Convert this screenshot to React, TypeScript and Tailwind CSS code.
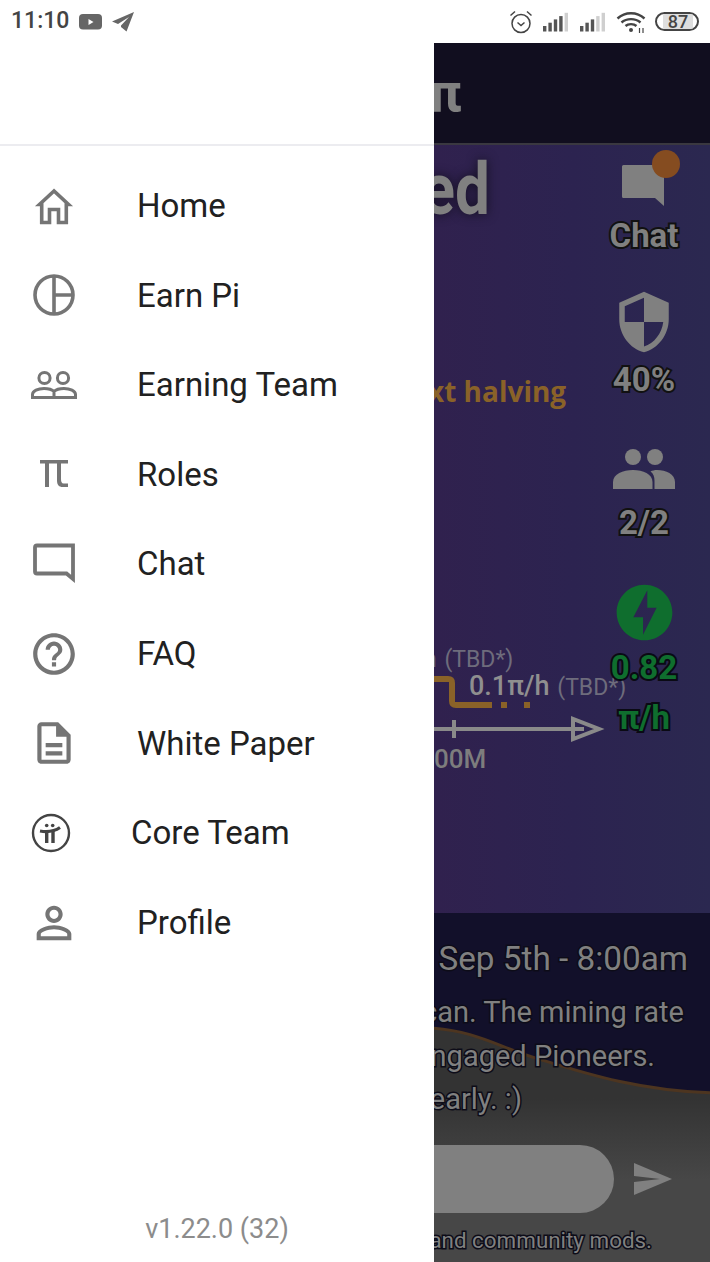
import React from "react"
import { MdHelpOutline, MdOfflineBolt, MdOutlineDescription, MdPersonOutline, MdSecurity } from "react-icons/md"

const ICON_COLOR = "#757575"

const HomeIcon = () => (
  <svg viewBox="0 0 48 48" className="h-12 w-12" fill="none" stroke={ICON_COLOR} strokeWidth="3.6">
    <path d="M24 9 9.5 22.5h2.2v18h7.8V27.5h9v13h7.8v-18h2.2z" />
  </svg>
)

const PieIcon = () => (
  <svg viewBox="0 0 48 48" className="h-12 w-12" fill="none" stroke={ICON_COLOR} strokeWidth="3.6">
    <circle cx="24" cy="24" r="19" />
    <path d="M24 5v38M24 24h19" />
  </svg>
)

const TeamIcon = () => (
  <svg viewBox="0 0 48 48" className="h-12 w-12" fill="none" stroke={ICON_COLOR} strokeWidth="3">
    <circle cx="14.5" cy="17" r="5.6" />
    <circle cx="33" cy="17" r="5.6" />
    <path d="M2.5 36.5v-3c0-3.500 5.500-6 11.500-6 4.500 0 8 1 10 3 2-2 5.500-3 10-3 6 0 11.500 2.500 11.500 6v3zM24 30.500v6" />
  </svg>
)

const PiIcon = () => (
  <svg viewBox="0 0 48 48" className="h-12 w-12" fill={ICON_COLOR}>
    <path d="M10 9h28v3.600H31v15.400c0 3 .8 4.400 2.500 4.400H38V36h-5.500c-3.300 0-5.500-2-5.500-6.500V12.600h-8V36h-4V12.600h-5z" />
  </svg>
)

const ChatIcon = () => (
  <svg viewBox="0 0 48 48" className="h-12 w-12" fill="none" stroke={ICON_COLOR} strokeWidth="3.8">
    <path d="M7 5.500h36v33.500l-6.500-5.500H7a2 2 0 0 1-2-2V7.500a2 2 0 0 1 2-2z" />
  </svg>
)

const PiLogo = () => (
  <svg viewBox="0 0 40 40" className="h-10 w-10" fill="none" stroke="#444444">
    <circle cx="20" cy="20" r="18" strokeWidth="2.400" />
    <path d="M9 18c6 1 14 .6 20-3.500" strokeWidth="3.200" />
    <path d="M15.700 18v12M22 18v12" strokeWidth="3.400" />
    <circle cx="15.700" cy="12.500" r="1.800" fill="#444444" stroke="none" />
    <circle cx="21.700" cy="12.500" r="1.800" fill="#444444" stroke="none" />
  </svg>
)

const menu = [
  { label: "Home", icon: <HomeIcon /> },
  { label: "Earn Pi", icon: <PieIcon /> },
  { label: "Earning Team", icon: <TeamIcon /> },
  { label: "Roles", icon: <PiIcon /> },
  { label: "Chat", icon: <ChatIcon /> },
  { label: "FAQ", icon: <MdHelpOutline size={50} color={ICON_COLOR} /> },
  { label: "White Paper", icon: <MdOutlineDescription size={50} color={ICON_COLOR} /> },
  { label: "Core Team", icon: <PiLogo />, tight: true },
  { label: "Profile", icon: <MdPersonOutline size={52} color={ICON_COLOR} /> },
]

const Signal = ({ bars }: { bars: number }) => (
  <svg viewBox="0 0 27 20" className="h-5 w-[27px]">
    {[0, 1, 2, 3, 4].map((i) => (
      <rect
        key={i}
        x={i * 5.4}
        y={14 - i * 3.300}
        width="3.400"
        height={5.500 + i * 3.300}
        fill={i < bars ? "#555555" : "#cfcfcf"}
      />
    ))}
  </svg>
)

const StatusBar = () => (
  <div className="flex h-[43px] items-center justify-between bg-white pl-[11px] pr-[11px]">
    <div className="flex items-center">
      <span className="text-[23px] font-medium text-[#444444]">11:10</span>
      <svg viewBox="0 0 23 16" className="ml-[10px] h-4 w-[23px]">
        <rect width="23" height="15.500" rx="4" fill="#666666" />
        <path d="M9.500 5v6l5-3z" fill="#ffffff" />
      </svg>
      <svg viewBox="0 0 22 20" className="ml-[10px] h-5 w-[22px]">
        <path d="M22 0 0 9.500l6 2.500L17 5 9 13.500v1.500l5.500 4.500z" fill="#666666" />
      </svg>
    </div>
    <div className="flex items-center">
      <svg viewBox="0 0 26 26" className="h-[26px] w-[26px]" fill="none" stroke="#444444" strokeWidth="1.500">
        <circle cx="13" cy="14.500" r="9" />
        <path d="M9.500 13.500 13 16.500l3.500-3M2.500 6.500 7 2.500M23.500 6.500 19 2.500" />
      </svg>
      <div className="ml-[9px]">
        <Signal bars={4} />
      </div>
      <div className="ml-[10px]">
        <Signal bars={3} />
      </div>
      <svg viewBox="0 0 30 22" className="ml-[9px] h-[22px] w-[30px]" fill="none" stroke="#444444" strokeWidth="2.400">
        <path d="M1.500 7.500c7.500-7 19.500-7 27 0M5.500 11.500c5-4.500 14-4.500 19 0M9.500 15c2.800-2.500 8.200-2.500 11 0" />
        <circle cx="15" cy="19" r="2" fill="#444444" stroke="none" />
        <path d="M23.500 17v5M27 17v5" strokeWidth="1.200" />
      </svg>
      <div className="ml-[9px] flex h-[19px] w-[44px] items-center overflow-hidden rounded-full border-2 border-[#444444] pl-[6px]">
        <div className="flex h-full w-[30px] items-center justify-center bg-[#dedede] text-[18px] font-medium text-[#444444]">87</div>
      </div>
    </div>
  </div>
)

const Drawer = () => (
  <div className="flex w-[434px] shrink-0 flex-col bg-white">
    <div className="h-[103px] border-b-2 border-[#ececf0]" />
    <div className="flex-1 pt-[15px]">
      {menu.map((item) => (
        <div key={item.label} className="flex h-[89.6px] items-center">
          <div className={item.tight ? "flex w-[131px] justify-center pr-[29px]" : "flex w-[137px] justify-center pr-[29px]"}>
            {item.icon}
          </div>
          <span className="text-[33px] text-[#212121]">{item.label}</span>
        </div>
      ))}
    </div>
    <div className="pb-[13px] text-center text-[27px] text-[#8c8c8c]">v1.22.0 (32)</div>
  </div>
)

const outlined = "font-bold text-[#808080] [-webkit-text-stroke:4px_#111111] [paint-order:stroke_fill]"
const greenOutlined = "font-bold text-[#0f6e2e] [-webkit-text-stroke:4px_#0a0a14] [paint-order:stroke_fill]"
const thinOutlined = "text-[#808080] [-webkit-text-stroke:3px_#0d0c18] [paint-order:stroke_fill]"

const SideStats = () => (
  <div className="relative flex w-[132px] shrink-0 flex-col items-center pt-[17px] leading-none">
    <div className="relative h-[48px] w-[48px]">
      <svg viewBox="0 0 48 48" className="h-[48px] w-[48px]">
        <path d="M3.500 3H44v41l-9-8H3.500A1.500 1.500 0 0 1 2 34.500v-30A1.500 1.500 0 0 1 3.500 3z" fill="#808080" />
      </svg>
      <div className="absolute right-[-12px] top-[-12px] h-[28px] w-[28px] rounded-full bg-[#854c20]" />
    </div>
    <div className={`mt-[9px] text-[33px] ${outlined}`}>Chat</div>
    <div className="mt-[37px]">
      <MdSecurity size={66} color="#808080" />
    </div>
    <div className={`mt-[8px] text-[33px] ${outlined}`}>40%</div>
    <svg viewBox="0 0 62 40" className="mt-[53px] h-[40px] w-[62px]" fill="#808080">
      <circle cx="20" cy="8" r="8" />
      <circle cx="42" cy="8" r="8" />
      <path d="M0 40v-7c0-8 10-12 20-12s19.500 4 19.500 12v7z" />
      <path d="M44 21c9 0 18 4 18 12v7H41.500v-8c0-4-1-7.500-4-9.500 2-1 4-1.500 6.500-1.500z" />
    </svg>
    <div className={`mt-[17px] text-[33px] ${outlined}`}>2/2</div>
    <div className="mt-[40px]">
      <MdOfflineBolt size={67} color="#0f6e2e" />
    </div>
    <div className={`mt-[5px] text-[33px] ${greenOutlined}`}>0.82</div>
    <div className={`mt-[17px] text-[33px] ${greenOutlined}`}>π/h</div>
  </div>
)

const Chart = () => (
  <div className="relative min-w-0 flex-1">
    <div className="absolute left-0 top-[15px] flex w-[56px] origin-bottom scale-y-[1.17] justify-end whitespace-nowrap text-[62px] font-bold leading-[70px] text-[#808080] [text-shadow:0_0_10px_#141020]">
      ed
    </div>
    <div className="absolute left-[-6px] top-[225px] whitespace-nowrap font-['Open_Sans',sans-serif] text-[28px] font-bold text-[#8a6228]">
      xt halving
    </div>
    <div className="absolute left-[-10px] top-[498px] whitespace-nowrap text-[23px] text-[#6e6c7c]">h <span className="ml-[2px]">(TBD*)</span></div>
    <div className="absolute left-[35px] top-[521px] whitespace-nowrap text-[27px] font-medium text-[#8f8f8f]">
      0.1π/h <span className="ml-[1px] text-[23px] font-normal text-[#6e6c7c]">(TBD*)</span>
    </div>
    <svg viewBox="0 0 180 90" className="absolute left-0 top-[530px] h-[90px] w-[180px]" fill="none">
      <path d="M0 4h14c3 0 4 1 4 4v18c0 3 1 4 4 4h36" stroke="#8a6228" strokeWidth="6" />
      <path d="M67 30h6M90 30h6" stroke="#8a6228" strokeWidth="6" />
      <path d="M0 54h150M20 45v18" stroke="#8a8a8a" strokeWidth="4" />
      <path d="M139 44v20l26-10z" stroke="#8a8a8a" strokeWidth="4" />
    </svg>
    <div className="absolute left-0 top-[595px] text-[26px] font-medium text-[#7d7d7d]">00M</div>
  </div>
)

const Notice = () => (
  <div className="relative h-[349px] overflow-hidden bg-[#12102a]">
    <svg viewBox="0 0 276 349" preserveAspectRatio="none" className="absolute inset-0 h-full w-full">
      <defs>
        <linearGradient id="sand" x1="0" y1="0" x2="0" y2="1">
          <stop offset="0.3" stopColor="#333333" />
          <stop offset="0.65" stopColor="#474747" />
        </linearGradient>
      </defs>
      <path d="M-5 115C45 118 65 135 105 146c45 14 100 32 176 34v169H-5z" fill="url(#sand)" />
      <path d="M-5 115C45 118 65 135 105 146c45 14 100 32 176 34" fill="none" stroke="#4d3520" strokeWidth="3" />
    </svg>
    <div className="relative flex flex-col">
      <div className={`mt-[27px] flex justify-end whitespace-nowrap pr-[22px] text-[33.300px] leading-[38px] ${thinOutlined}`}>Sep 5th - 8:00am</div>
      <div className={`mt-[13px] flex justify-end whitespace-nowrap pr-[26px] text-[29px] leading-[43.500px] ${thinOutlined}`}>can. The mining rate</div>
      <div className={`flex justify-end whitespace-nowrap pr-[55px] text-[29px] leading-[43.500px] ${thinOutlined}`}>ngaged Pioneers.</div>
      <div className={`flex justify-end whitespace-nowrap pr-[188px] text-[29px] leading-[43.500px] ${thinOutlined}`}>early. :)</div>
      <div className="mt-[23.500px] flex items-center">
        <div className="h-[68px] w-[180px] rounded-r-[34px] bg-[#808080]" />
        <svg viewBox="0 0 38 32" className="ml-[20px] h-8 w-[38px]">
          <path d="M0 0l38 16L0 32V19l26-3L0 13z" fill="#808080" />
        </svg>
      </div>
      <div className={`mt-[11px] flex justify-end whitespace-nowrap pr-[58px] text-[22.400px] leading-[32px] ${thinOutlined}`}>and community mods.</div>
    </div>
  </div>
)

const Background = () => (
  <div className="flex min-w-0 flex-1 flex-col overflow-hidden">
    <div className="flex h-[102px] shrink-0 items-center border-b-2 border-[#3a3840] bg-[#110e1f]">
      <span className="ml-[-42px] whitespace-nowrap text-[54px] font-bold leading-none text-[#808080]">ππ</span>
    </div>
    <div className="flex h-[768px] shrink-0 bg-gradient-to-r from-[#30214e] via-[#2c2350] to-[#2b2850]">
      <Chart />
      <SideStats />
    </div>
    <Notice />
  </div>
)

export default function App() {
  return (
    <div className="flex h-[1262px] w-[710px] flex-col overflow-hidden bg-white font-['Roboto',sans-serif]">
      <StatusBar />
      <div className="flex min-h-0 flex-1">
        <Drawer />
        <Background />
      </div>
    </div>
  )
}
